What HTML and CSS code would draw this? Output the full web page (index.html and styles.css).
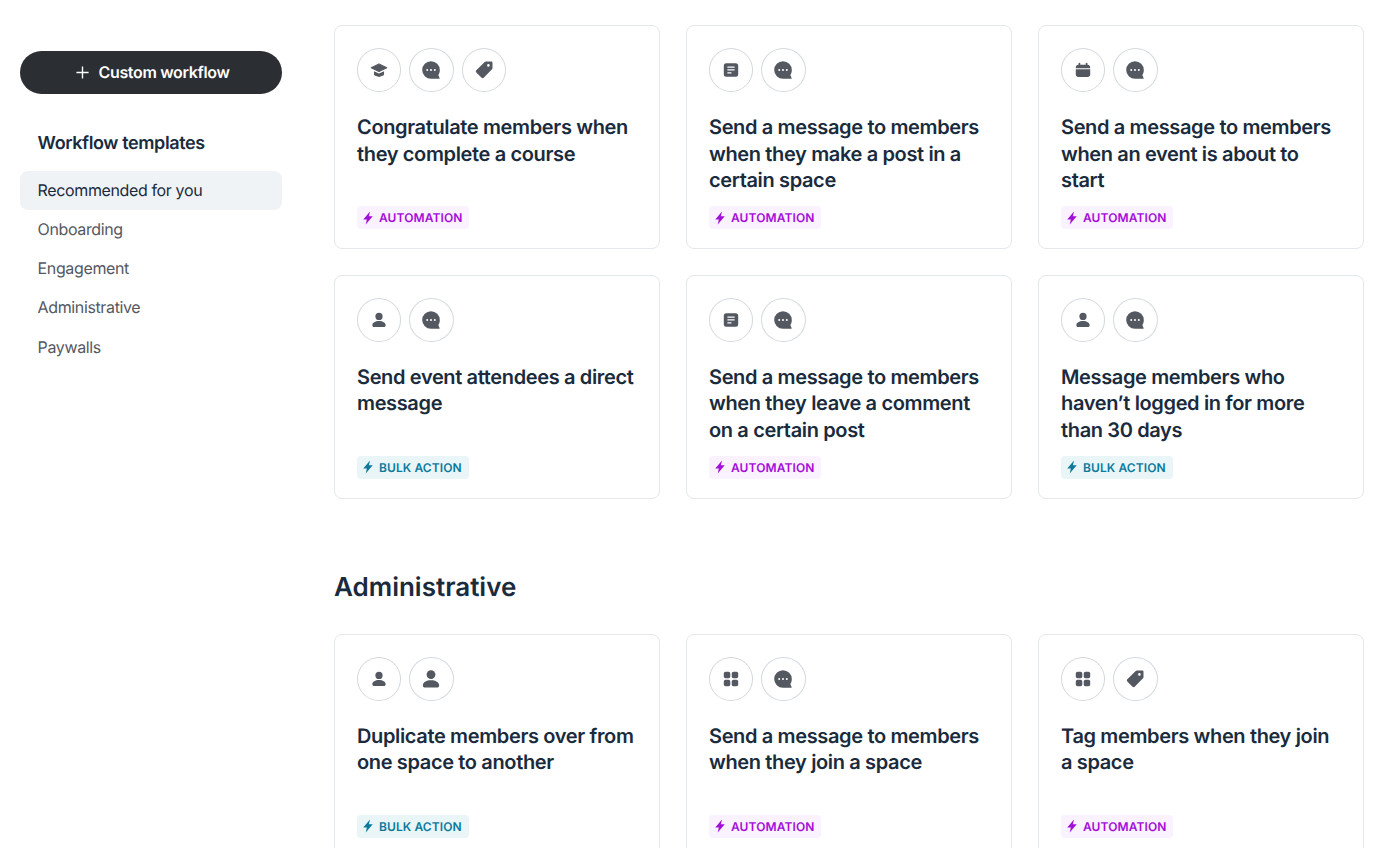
FILE: index.html
```html
<!DOCTYPE html>
<html lang="en">
<head>
    <meta charset="UTF-8">
    <meta name="viewport" content="width=device-width, initial-scale=1.0">
    <title>Workflow templates</title>
    <link rel="stylesheet" href="styles.css">
</head>
<body>
    <svg class="sprite" xmlns="http://www.w3.org/2000/svg">
        <symbol id="i-course" viewBox="0 0 20 20">
            <path d="M10 3.200 18.600 7.400 10 11.600 1.400 7.400Z" stroke="currentColor" stroke-width="1.200" stroke-linejoin="round"/>
            <path d="M4.400 11.400 10 14l5.600-2.600v3.400c0 .5-.3 1-.8 1.200L10 17.800l-4.800-1.800c-.5-.2-.8-.7-.8-1.200Z"/>
        </symbol>
        <symbol id="i-chat" viewBox="0 0 20 20">
            <path fill-rule="evenodd" d="M10 1.200a8.800 8.800 0 0 1 8.800 8.800c0 1.900-.5 3.600-1.500 5l1.400 3.300c.1.300-.1.500-.4.500H10a8.800 8.800 0 0 1 0-17.600ZM6.200 9a1 1 0 1 0 0 2 1 1 0 0 0 0-2Zm3.800 0a1 1 0 1 0 0 2 1 1 0 0 0 0-2Zm3.800 0a1 1 0 1 0 0 2 1 1 0 0 0 0-2Z"/>
        </symbol>
        <symbol id="i-tag" viewBox="0 0 20 20">
            <path fill-rule="evenodd" d="M12 1.500h5.300c.7 0 1.200.5 1.200 1.200V8c0 .5-.2 1-.5 1.300l-8.300 8.400c-.6.600-1.500.6-2.100 0l-5.300-5.300c-.6-.6-.6-1.500 0-2.100l8.400-8.300c.4-.3.800-.5 1.300-.5h.500Zm2.400 2.600a1.300 1.300 0 1 0 0 2.600 1.300 1.300 0 0 0 0-2.600Z"/>
        </symbol>
        <symbol id="i-post" viewBox="0 0 20 20">
            <path fill-rule="evenodd" d="M4.800 2.500h10.400a2.800 2.800 0 0 1 2.800 2.800v9.400a2.800 2.800 0 0 1-2.800 2.800H4.800A2.800 2.800 0 0 1 2 14.700V5.300a2.800 2.800 0 0 1 2.800-2.800ZM6 6v1.400h8V6H6Zm0 3.200v1.400h8V9.200H6Zm0 3.200v1.400h4.500v-1.400H6Z"/>
        </symbol>
        <symbol id="i-event" viewBox="0 0 20 20">
            <path d="M6 2a1 1 0 0 1 1 1v1.200h6V3a1 1 0 1 1 2 0v1.200c1.800 0 3 1.300 3 2.900V8H2v-.9c0-1.600 1.200-2.900 3-2.900V3a1 1 0 0 1 1-1Z"/>
            <path d="M2 9.300h16v5.700c0 1.600-1.200 2.800-2.800 2.800H4.800C3.200 17.800 2 16.600 2 15Z"/>
        </symbol>
        <symbol id="i-member" viewBox="0 0 20 20">
            <circle cx="10" cy="6" r="4"/>
            <path d="M10 11.200c4.100 0 7.400 1.800 7.400 4.600 0 1.200-.8 2-2 2H4.600c-1.200 0-2-.8-2-2 0-2.800 3.300-4.600 7.400-4.600Z"/>
        </symbol>
        <symbol id="i-spaces" viewBox="0 0 20 20">
            <rect x="2" y="2" width="7.200" height="7.200" rx="2"/>
            <rect x="10.800" y="2" width="7.200" height="7.200" rx="2"/>
            <rect x="2" y="10.800" width="7.200" height="7.200" rx="2"/>
            <rect x="10.800" y="10.800" width="7.200" height="7.200" rx="2"/>
        </symbol>
        <symbol id="i-bolt" viewBox="0 0 16 16">
            <path d="M10.300.6 2.600 9.600h4.100L5.400 15.400l8-9.400H9Z"/>
        </symbol>
    </svg>

    <div class="layout">
        <aside class="sidebar">
            <button class="custom-btn">
                <svg class="plus" viewBox="0 0 16 16"><path d="M8 .5v15M.5 8h15"/></svg>
                Custom workflow
            </button>
            <h2 class="side-title">Workflow templates</h2>
            <nav class="side-nav">
                <a class="side-link active">Recommended for you</a>
                <a class="side-link">Onboarding</a>
                <a class="side-link">Engagement</a>
                <a class="side-link">Administrative</a>
                <a class="side-link">Paywalls</a>
            </nav>
        </aside>

        <main class="content">
            <div class="grid">
                <div class="card">
                    <div class="icons">
                        <span class="circle"><svg class="ic-sm"><use href="#i-course"/></svg></span>
                        <span class="circle"><svg class="ic"><use href="#i-chat"/></svg></span>
                        <span class="circle"><svg class="ic"><use href="#i-tag"/></svg></span>
                    </div>
                    <h3 class="card-title">Congratulate members when they complete a course</h3>
                    <span class="badge automation"><svg><use href="#i-bolt"/></svg>AUTOMATION</span>
                </div>
                <div class="card">
                    <div class="icons">
                        <span class="circle"><svg class="ic-sm"><use href="#i-post"/></svg></span>
                        <span class="circle"><svg class="ic"><use href="#i-chat"/></svg></span>
                    </div>
                    <h3 class="card-title">Send a message to members when they make a post in a certain space</h3>
                    <span class="badge automation"><svg><use href="#i-bolt"/></svg>AUTOMATION</span>
                </div>
                <div class="card">
                    <div class="icons">
                        <span class="circle"><svg class="ic-sm"><use href="#i-event"/></svg></span>
                        <span class="circle"><svg class="ic"><use href="#i-chat"/></svg></span>
                    </div>
                    <h3 class="card-title">Send a message to members when an event is about to start</h3>
                    <span class="badge automation"><svg><use href="#i-bolt"/></svg>AUTOMATION</span>
                </div>
                <div class="card">
                    <div class="icons">
                        <span class="circle"><svg class="ic-sm"><use href="#i-member"/></svg></span>
                        <span class="circle"><svg class="ic"><use href="#i-chat"/></svg></span>
                    </div>
                    <h3 class="card-title">Send event attendees a direct message</h3>
                    <span class="badge bulk"><svg><use href="#i-bolt"/></svg>BULK ACTION</span>
                </div>
                <div class="card">
                    <div class="icons">
                        <span class="circle"><svg class="ic-sm"><use href="#i-post"/></svg></span>
                        <span class="circle"><svg class="ic"><use href="#i-chat"/></svg></span>
                    </div>
                    <h3 class="card-title">Send a message to members when they leave a comment on a certain post</h3>
                    <span class="badge automation"><svg><use href="#i-bolt"/></svg>AUTOMATION</span>
                </div>
                <div class="card">
                    <div class="icons">
                        <span class="circle"><svg class="ic-sm"><use href="#i-member"/></svg></span>
                        <span class="circle"><svg class="ic"><use href="#i-chat"/></svg></span>
                    </div>
                    <h3 class="card-title">Message members who haven’t logged in for more than 30 days</h3>
                    <span class="badge bulk"><svg><use href="#i-bolt"/></svg>BULK ACTION</span>
                </div>
            </div>

            <h2 class="section-title">Administrative</h2>

            <div class="grid">
                <div class="card">
                    <div class="icons">
                        <span class="circle"><svg class="ic-sm"><use href="#i-member"/></svg></span>
                        <span class="circle"><svg class="ic-lg"><use href="#i-member"/></svg></span>
                    </div>
                    <h3 class="card-title">Duplicate members over from one space to another</h3>
                    <span class="badge bulk"><svg><use href="#i-bolt"/></svg>BULK ACTION</span>
                </div>
                <div class="card">
                    <div class="icons">
                        <span class="circle"><svg class="ic-sm"><use href="#i-spaces"/></svg></span>
                        <span class="circle"><svg class="ic"><use href="#i-chat"/></svg></span>
                    </div>
                    <h3 class="card-title">Send a message to members when they join a space</h3>
                    <span class="badge automation"><svg><use href="#i-bolt"/></svg>AUTOMATION</span>
                </div>
                <div class="card">
                    <div class="icons">
                        <span class="circle"><svg class="ic-sm"><use href="#i-spaces"/></svg></span>
                        <span class="circle"><svg class="ic"><use href="#i-tag"/></svg></span>
                    </div>
                    <h3 class="card-title">Tag members when they join a space</h3>
                    <span class="badge automation"><svg><use href="#i-bolt"/></svg>AUTOMATION</span>
                </div>
            </div>
        </main>
    </div>
</body>
</html>
```

FILE: styles.css
```css
:root {
    --text-dark: #1a2b3d;
    --text-muted: #545861;
    --icon-color: #545861;
    --border-color: #e4e7eb;
    --circle-border: #d4d9df;
    --active-bg: #f0f3f5;
}
* {
    margin: 0;
    padding: 0;
    box-sizing: border-box;
}
html, body {
    height: 848px;
    overflow: hidden;
}
body {
    font-family: 'Inter', sans-serif;
    background-color: #ffffff;
    color: var(--text-dark);
    text-rendering: geometricPrecision;
}
.sprite {
    display: none;
}
.layout {
    display: flex;
    padding-left: 20px;
}
.sidebar {
    width: 262px;
    flex-shrink: 0;
    padding-top: 51px;
}
.custom-btn {
    display: flex;
    align-items: center;
    justify-content: center;
    gap: 9px;
    width: 100%;
    height: 43px;
    padding: 0 0 1px 4px;
    border: none;
    border-radius: 22px;
    background-color: #2b2e33;
    color: #ffffff;
    font-family: inherit;
    font-size: 16px;
    font-weight: 600;
    letter-spacing: -0.33px;
    text-rendering: geometricPrecision;
    cursor: pointer;
}
.plus {
    width: 13px;
    height: 13px;
    fill: none;
    stroke: #ffffff;
    stroke-width: 1.7;
}
.side-title {
    margin: 37px 0 13.8px;
    padding-left: 17.6px;
    font-size: 18px;
    font-weight: 600;
    letter-spacing: -0.39px;
    line-height: 26px;
}
.side-nav {
    display: flex;
    flex-direction: column;
}
.side-link {
    display: block;
    height: 39.2px;
    padding-left: 17.6px;
    border-radius: 8px;
    color: var(--text-muted);
    font-size: 16px;
    letter-spacing: -0.37px;
    line-height: 39px;
}
.side-link.active {
    background-color: var(--active-bg);
    color: var(--text-dark);
}
.content {
    width: 1030px;
    margin-left: 52px;
    padding-top: 25px;
}
.grid {
    display: grid;
    grid-template-columns: repeat(3, 326px);
    gap: 25.6px 26px;
}
.card {
    display: flex;
    flex-direction: column;
    align-items: flex-start;
    height: 224px;
    padding: 22px 22px 19px;
    border: 1px solid var(--border-color);
    border-radius: 8px;
    background-color: #ffffff;
}
.icons {
    display: flex;
    gap: 8px;
}
.circle {
    display: flex;
    align-items: center;
    justify-content: center;
    width: 44.3px;
    height: 44px;
    border: 1px solid var(--circle-border);
    border-radius: 50%;
    color: var(--icon-color);
}
.circle svg {
    fill: currentColor;
}
.ic {
    width: 20px;
    height: 20px;
}
.ic-sm {
    width: 18px;
    height: 18px;
}
.ic-lg {
    width: 22px;
    height: 22px;
}
.card-title {
    margin-top: 22px;
    font-size: 20px;
    font-weight: 600;
    letter-spacing: -0.36px;
    line-height: 26.5px;
}
.badge {
    display: inline-flex;
    align-items: center;
    gap: 4px;
    margin-top: auto;
    width: 112px;
    height: 23px;
    padding-left: 4px;
    border-radius: 4px;
    font-size: 12px;
    font-weight: 600;
    letter-spacing: 0.1px;
}
.badge svg {
    width: 14px;
    height: 14px;
    fill: currentColor;
}
.badge.automation {
    background-color: #faf2fe;
    color: #a40ed9;
}
.badge.bulk {
    background-color: #eaf5f8;
    color: #0c7a9c;
}
.section-title {
    margin: 71.5px 0 27.5px;
    font-size: 26px;
    font-weight: 600;
    line-height: 36px;
}
```
